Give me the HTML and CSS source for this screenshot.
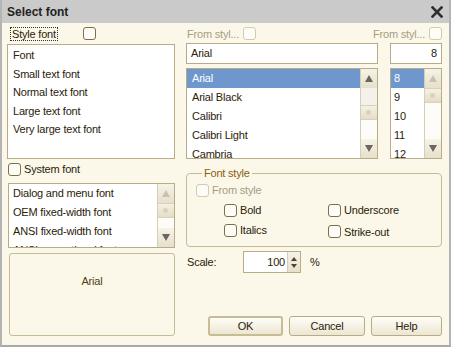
FILE: index.html
```html
<!DOCTYPE html>
<html lang="en">
<head>
    <meta charset="UTF-8">
    <title>Select font</title>
    <link rel="stylesheet" href="styles.css">
</head>
<body>
    <div class="window">
        <div class="titlebar">
            <span class="title">Select font</span>
            <svg class="close" width="12" height="12" viewBox="0 0 12 12">
                <path d="M1.5 1.5 L10.5 10.5 M10.5 1.5 L1.5 10.5" stroke="#2f2f2f" stroke-width="2.6" stroke-linecap="square"/>
            </svg>
        </div>
        <div class="content">
            <div class="left">
                <div class="style-row">
                    <span class="focus-label">Style font</span>
                    <span class="check"></span>
                </div>
                <div class="list list-styles">
                    <div class="item">Font</div>
                    <div class="item">Small text font</div>
                    <div class="item">Normal text font</div>
                    <div class="item">Large text font</div>
                    <div class="item">Very large text font</div>
                </div>
                <label class="check-row system-row"><span class="check"></span>System font</label>
                <div class="list list-system">
                    <div class="items">
                        <div class="item">Dialog and menu font</div>
                        <div class="item">OEM fixed-width font</div>
                        <div class="item">ANSI fixed-width font</div>
                        <div class="item">ANSI proportional font</div>
                    </div>
                    <div class="scrollbar">
                        <div class="sb-btn up disabled"></div>
                        <div class="sb-thumb"></div>
                        <div class="sb-track"></div>
                        <div class="sb-btn down"></div>
                    </div>
                </div>
                <div class="preview">Arial</div>
            </div>
            <div class="right">
                <div class="from-row">
                    <span class="from"><span class="muted">From styl...</span><span class="check disabled"></span></span>
                    <span class="from"><span class="muted">From styl...</span><span class="check disabled"></span></span>
                </div>
                <div class="inputs">
                    <div class="input name-input">Arial</div>
                    <div class="input size-input">8</div>
                </div>
                <div class="lists">
                    <div class="list list-fonts">
                        <div class="items">
                            <div class="item selected">Arial</div>
                            <div class="item">Arial Black</div>
                            <div class="item">Calibri</div>
                            <div class="item">Calibri Light</div>
                            <div class="item">Cambria</div>
                        </div>
                        <div class="scrollbar">
                            <div class="sb-btn up"></div>
                            <div class="sb-track short"></div>
                            <div class="sb-thumb"></div>
                            <div class="sb-track"></div>
                            <div class="sb-btn down"></div>
                        </div>
                    </div>
                    <div class="list list-sizes">
                        <div class="items">
                            <div class="item selected">8</div>
                            <div class="item">9</div>
                            <div class="item">10</div>
                            <div class="item">11</div>
                            <div class="item">12</div>
                        </div>
                        <div class="scrollbar">
                            <div class="sb-btn up disabled"></div>
                            <div class="sb-thumb"></div>
                            <div class="sb-track"></div>
                            <div class="sb-btn down"></div>
                        </div>
                    </div>
                </div>
                <fieldset class="group">
                    <legend>Font style</legend>
                    <label class="check-row from-style muted"><span class="check disabled"></span>From style</label>
                    <div class="style-grid">
                        <label class="check-row"><span class="check"></span>Bold</label>
                        <label class="check-row"><span class="check"></span>Underscore</label>
                        <label class="check-row"><span class="check"></span>Italics</label>
                        <label class="check-row strike"><span class="check"></span>Strike-out</label>
                    </div>
                </fieldset>
                <div class="scale-row">
                    <span class="scale-label">Scale:</span>
                    <div class="spin">
                        <span class="spin-value">100</span>
                        <span class="spin-btns"><span class="spin-up"></span><span class="spin-down"></span></span>
                    </div>
                    <span class="percent">%</span>
                </div>
                <div class="buttons">
                    <button class="btn default" type="button">OK</button>
                    <button class="btn" type="button">Cancel</button>
                    <button class="btn" type="button">Help</button>
                </div>
            </div>
        </div>
    </div>
</body>
</html>
```
FILE: styles.css
```css
body {
    margin: 0;
    font-family: "Liberation Sans", Arial, sans-serif;
    font-size: 11px;
    letter-spacing: -0.2px;
    color: #2a220a;
}

.window {
    width: 451px;
    height: 347px;
    box-sizing: border-box;
    background-color: #fbf8e9;
    border-left: 2px solid #b4b4b4;
    border-right: 2px solid #b4b4b4;
    border-bottom: 2px solid #a8a8a8;
    overflow: hidden;
}

.titlebar {
    height: 23px;
    background-color: #cacaca;
    display: flex;
    align-items: center;
    justify-content: space-between;
    padding: 0 6px 0 5px;
}

.title {
    font-size: 12px;
    font-weight: bold;
    letter-spacing: 0;
    color: #222;
}

.close {
    margin-top: 1px;
}

.content {
    display: flex;
    gap: 11px;
    padding: 4px 0 0 5px;
}

.left {
    width: 168px;
    display: flex;
    flex-direction: column;
}

.right {
    width: 256px;
    display: flex;
    flex-direction: column;
}

.style-row {
    height: 17px;
    display: flex;
    align-items: flex-start;
    gap: 25px;
    padding-left: 3px;
}

.focus-label {
    border: 1px dotted #333;
    padding: 0 1px;
    line-height: 12px;
}

.check {
    display: inline-block;
    width: 11px;
    height: 11px;
    border: 1px solid #7d6e4c;
    border-radius: 3px;
    background-color: #fdfcf6;
    flex-shrink: 0;
}

.check.disabled {
    border-color: #d2cab2;
}

.muted {
    color: #a59d82;
}

.list {
    box-sizing: border-box;
    border: 1px solid #b7ac86;
    background-color: #fff;
    display: flex;
    overflow: hidden;
}

.items {
    flex: 1;
    overflow: hidden;
}

.item {
    height: 19px;
    line-height: 19px;
    padding-left: 5px;
    white-space: nowrap;
}

.item.selected {
    background-color: #6d97cd;
    color: #fff;
}

.list-styles {
    height: 115px;
    flex-direction: column;
    padding-top: 1px;
}

.list-styles .item {
    height: 18.5px;
    line-height: 18.5px;
}

.check-row {
    display: flex;
    align-items: center;
    gap: 3px;
}

.system-row {
    margin: 3px 0 0 1px;
    height: 14px;
}

.list-system {
    margin: 7px 0 0 1px;
    height: 65px;
}

.list-system .item {
    padding-left: 4px;
}

.scrollbar {
    width: 16px;
    border-left: 1px solid #d6cfb8;
    background-color: #f7f5ee;
    display: flex;
    flex-direction: column;
}

.sb-btn {
    height: 19px;
    flex-shrink: 0;
    background: linear-gradient(#f6f3e6, #e6e0cc);
    position: relative;
}

.sb-btn::after {
    content: "";
    position: absolute;
    left: 4px;
    width: 0;
    height: 0;
    border-left: 4px solid transparent;
    border-right: 4px solid transparent;
}

.sb-btn.up::after {
    top: 6px;
    border-bottom: 7px solid #6b675e;
}

.sb-btn.down::after {
    top: 6px;
    border-top: 7px solid #6b675e;
}

.sb-btn.disabled.up::after {
    border-bottom-color: #c8c2b0;
}

.sb-thumb {
    height: 13px;
    flex-shrink: 0;
    background: linear-gradient(#f5f1e2, #e4ddc7);
    border-top: 1px solid #d9d2bb;
    border-bottom: 1px solid #d9d2bb;
    position: relative;
}

.sb-thumb::after {
    content: "";
    position: absolute;
    left: 5px;
    top: 4px;
    width: 5px;
    height: 5px;
    border-radius: 50%;
    background-color: #d9d2be;
}

.sb-track {
    flex: 1;
    background-color: #fdfcf8;
}

.sb-track.short {
    flex: 0 0 17px;
    background-color: #f3f1ea;
}

.preview {
    margin: 5px 0 0 2px;
    height: 83px;
    box-sizing: border-box;
    border: 1px solid #c5bb98;
    border-radius: 3px;
    text-align: center;
    color: #4e3f10;
    padding-top: 21px;
    line-height: 13px;
}

.from-row {
    height: 16px;
    display: flex;
    justify-content: space-between;
    align-items: flex-start;
    margin-left: 1px;
}

.from {
    display: flex;
    gap: 4px;
    align-items: center;
}

.inputs {
    display: flex;
    justify-content: space-between;
    height: 21px;
}

.input {
    box-sizing: border-box;
    border: 1px solid #b7ac86;
    background-color: #fff;
    height: 21px;
    line-height: 19px;
    padding: 0 4px;
}

.name-input {
    width: 192px;
}

.size-input {
    width: 52px;
    text-align: right;
}

.lists {
    margin-top: 4px;
    display: flex;
    justify-content: space-between;
}

.list-fonts {
    width: 192px;
    height: 91px;
}

.list-sizes {
    width: 52px;
    height: 91px;
}

.list-sizes .item {
    padding-left: 3px;
}

.group {
    margin: 7px 0 0 0;
    padding: 0 0 0 9px;
    height: 81px;
    box-sizing: border-box;
    border: 1px solid #c5bb98;
    border-radius: 4px;
}

.group legend {
    color: #8a5c10;
    padding: 0 2px;
    margin-left: 6px;
    line-height: 14px;
}

.from-style {
    height: 14px;
    margin-top: 3px;
}

.style-grid {
    display: grid;
    grid-template-columns: 104px 1fr;
    grid-auto-rows: 14px;
    row-gap: 6px;
    margin: 6px 0 0 28px;
}

.strike {
    margin-top: 3px;
}

.scale-row {
    margin-top: 4px;
    display: flex;
    align-items: center;
    height: 22px;
}

.scale-label {
    width: 56px;
    padding-left: 1px;
}

.spin {
    width: 58px;
    height: 22px;
    box-sizing: border-box;
    border: 1px solid #b7ac86;
    background-color: #fff;
    display: flex;
}

.spin-value {
    flex: 1;
    text-align: right;
    line-height: 20px;
    padding-right: 2px;
}

.spin-btns {
    width: 12px;
    border-left: 1px solid #d6cfb8;
    background: linear-gradient(#f6f3e6, #e6e0cc);
    display: flex;
    flex-direction: column;
    align-items: center;
    justify-content: center;
    gap: 3px;
}

.spin-up {
    border-left: 3px solid transparent;
    border-right: 3px solid transparent;
    border-bottom: 4px solid #4a4538;
}

.spin-down {
    border-left: 3px solid transparent;
    border-right: 3px solid transparent;
    border-top: 4px solid #4a4538;
}

.percent {
    margin-left: 9px;
}

.buttons {
    margin-top: 43px;
    display: flex;
    justify-content: flex-end;
    gap: 6px;
}

.btn {
    font-family: "Liberation Sans", Arial, sans-serif;
    font-size: 11px;
    letter-spacing: -0.2px;
    color: #2a220a;
    height: 20px;
    border: 1px solid #b7ac86;
    border-radius: 3px;
    background: linear-gradient(#fefdf8, #ece6d2);
    padding: 0;
    width: 71px;
}

.btn.default {
    width: 75px;
    border: 2px solid #c8bc94;
}

.buttons .btn:nth-child(2) {
    width: 76px;
}
```
